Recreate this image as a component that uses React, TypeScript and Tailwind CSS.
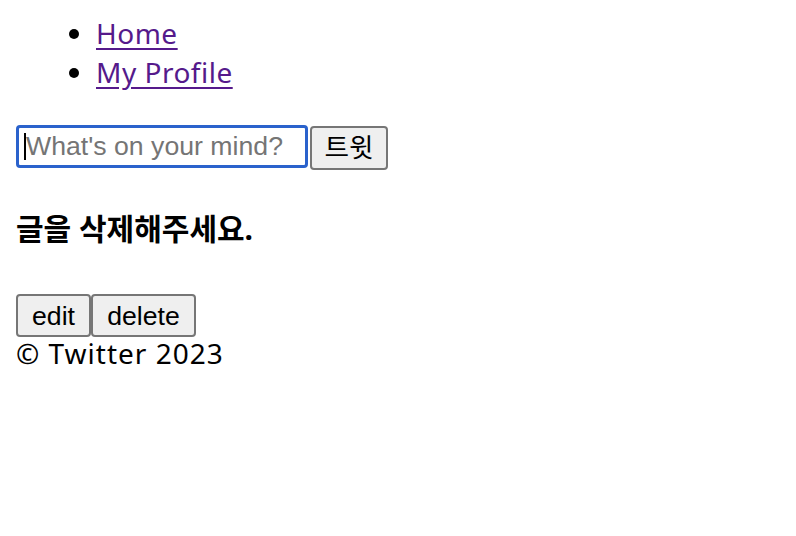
import React from 'react'

const sans = "font-['Noto_Sans','Noto_Sans_CJK_KR',sans-serif]"
const arial = "font-['Liberation_Sans','Noto_Sans_CJK_KR',sans-serif]"

export default function App() {
  return (
    <div className={`min-h-[536px] w-[796px] bg-white px-4 pt-[14px] text-black ${sans}`}>
      <ul className="list-disc pl-[80px] text-[28px] leading-[39px] tracking-[0.5px]">
        <li>
          <a href="#" className="text-[#551a8b] underline underline-offset-[4px]">
            Home
          </a>
        </li>
        <li>
          <a href="#" className="text-[#551a8b] underline underline-offset-[4px]">
            My Profile
          </a>
        </li>
      </ul>

      <form className="mt-[33px] flex items-start" onSubmit={(e) => e.preventDefault()}>
        <div className="relative">
          <input
            type="text"
            placeholder="What's on your mind?"
            className={`h-[43px] w-[292px] rounded-[4px] border-[3px] border-[#2a62cc] px-[7px] text-[26.67px] outline-none placeholder:text-[#757575] ${arial}`}
          />
          <span className="absolute left-[8px] top-[8px] h-[27px] w-[2px] bg-black" />
        </div>
        <button
          type="submit"
          className={`ml-[2px] mt-px h-[44px] w-[78px] rounded-[4px] border-2 border-[#767676] bg-[#efefef] text-[26.67px] ${arial}`}
        >
          트윗
        </button>
      </form>

      <div className="mt-[38px]">
        <h4 className="text-[30px] font-bold leading-[42px]">글을 삭제해주세요.</h4>
        <div className="mt-[44px] flex">
          <button className={`h-[43px] w-[75px] rounded-[4px] border-2 border-[#767676] bg-[#efefef] text-[26.67px] ${arial}`}>
            edit
          </button>
          <button className={`h-[43px] w-[105px] rounded-[4px] border-2 border-[#767676] bg-[#efefef] text-[26.67px] ${arial}`}>
            delete
          </button>
        </div>
      </div>

      <footer className="text-[28px] leading-[33px] tracking-[1px]">© Twitter 2023</footer>
    </div>
  )
}
